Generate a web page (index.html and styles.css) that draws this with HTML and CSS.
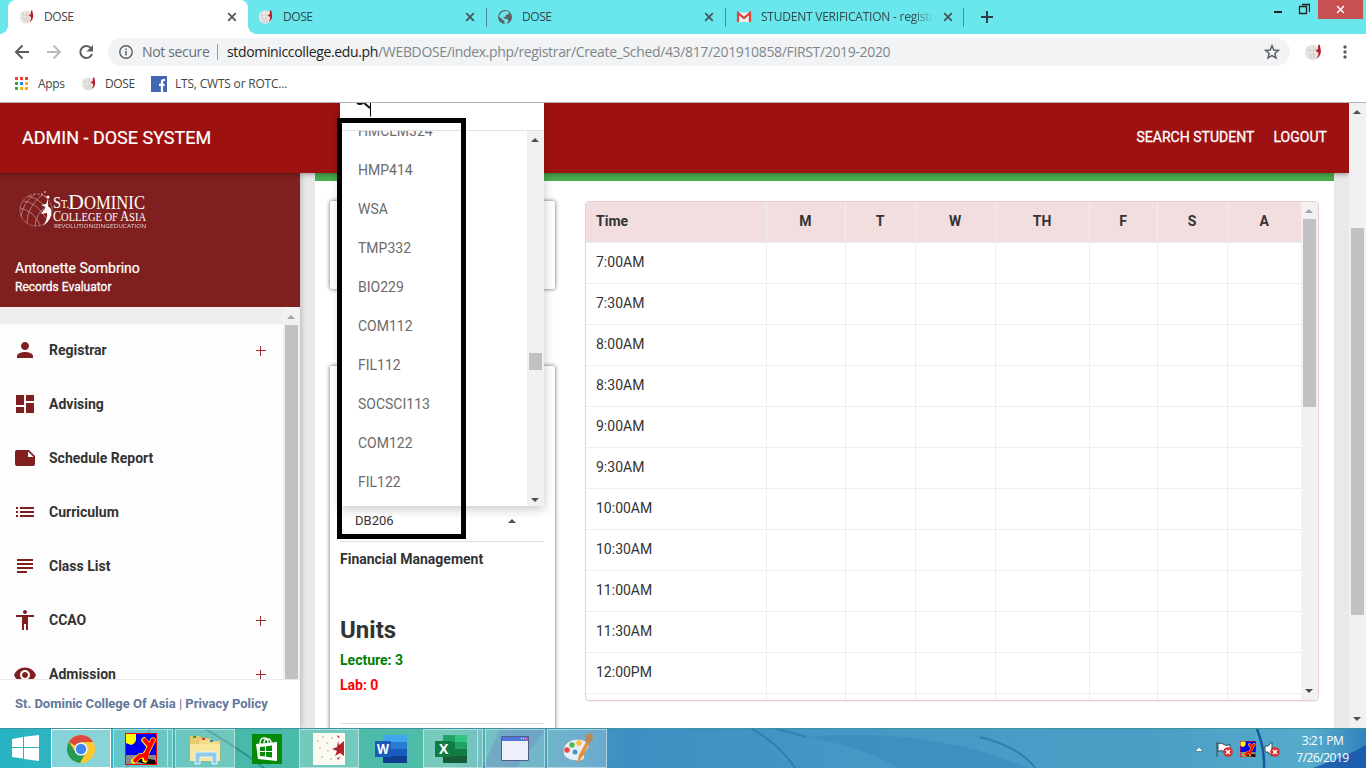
FILE: index.html
```html
<!DOCTYPE html>
<html lang="en">
<head>
<meta charset="utf-8">
<title>DOSE</title>
<link rel="stylesheet" href="styles.css">
</head>
<body>
<svg class="defs" aria-hidden="true">
  <defs>
    <symbol id="globe" viewBox="0 0 16 16"><circle cx="7.300" cy="8" r="6.600" fill="#ebe7e4"/><path d="M2 5.500q5 2 9-1M1.500 9q5 2.500 9-.5M4 3q0 6 3 11M8 2q-1 7 1 12M3 12q4 1 7-1" stroke="#cbc3be" stroke-width=".5" fill="none"/><path d="M12 1.500h1.300l.7 3.500q1.200 5-3.500 8.300 2.200-3 1.600-5.300l-2.600-1.500 2.200-1.200z" fill="#b5202c"/></symbol>
    <symbol id="man" viewBox="0 0 32 32"><path fill="#f00" d="M0 0h32v32H0z"/><path fill="#0000f8" d="M1 1h30v21H1z"/><path fill="#888" d="M1 22h30v9H1z"/><path d="M1 1h10v6q-1 4-5 5l-5-2z" fill="#ff0"/><path d="M9 27q6 4 22 4l-1-4-14-2z" fill="#000"/><path d="M19 7l5 6M28 7l-7 14q-2 2-6 2l-6 5M21 20l-1 7" stroke="#ff0" stroke-width="5.500" fill="none" stroke-linecap="round"/><path d="M19.500 7l5 6M28 7l-7 14q-2 2-6 2l-5 4.500M22 19l-1 7" stroke="#f00" stroke-width="4" fill="none" stroke-linecap="round"/></symbol>
    <symbol id="x" viewBox="0 0 10 10"><path d="M1.200 1.200l7.600 7.600M8.800 1.200l-7.600 7.600" stroke="currentColor" stroke-width="1.700"/></symbol>
    <symbol id="bad" viewBox="0 0 10 10"><circle cx="5" cy="5" r="4.800" fill="#d93030"/><path d="M3 3l4 4M7 3l-4 4" stroke="#fff" stroke-width="1.600"/></symbol>
  </defs>
</svg>

<header class="tabs">
  <div class="tab active"><svg class="fav"><use href="#globe"/></svg><span>DOSE</span><svg class="close"><use href="#x"/></svg></div>
  <div class="tab"><svg class="fav"><use href="#globe"/></svg><span>DOSE</span><svg class="close"><use href="#x"/></svg></div>
  <div class="tab sep"><svg class="fav" viewBox="0 0 16 16"><circle cx="8" cy="8" r="7" fill="#5b6164"/><path d="M6 2.500l4-.5 2.500 2-1.500 1.500-2 .2-.5 2-2.500.6 1.500 1.500h2l2 1.500-.5 1.500-2 2.500-1.500-.5v-2.500L5.500 10.500 2 7.500 3 5z" fill="#6ae7ec"/></svg><span>DOSE</span><svg class="close"><use href="#x"/></svg></div>
  <div class="tab sep"><svg class="fav" viewBox="0 0 16 16"><path fill="#eee" d="M2 3.500h12v9.500H2z"/><path d="M2 13V4l6 5 6-5v9" fill="none" stroke="#d84437" stroke-width="2.200"/></svg><span class="fade">STUDENT VERIFICATION - registrar</span><svg class="close"><use href="#x"/></svg></div>
  <div class="newtab sep"><svg width="12" height="12"><path d="M6 0v12M0 6h12" stroke="#333c40" stroke-width="2"/></svg></div>
  <div class="wins">
    <svg width="40" height="20"><path d="M4 12h8" stroke="#222" stroke-width="2"/><path d="M29.500 6.500h7v7h-7zM32 4.500h7.500V12" fill="none" stroke="#222" stroke-width="1.300"/></svg>
    <div class="winclose"><svg viewBox="0 0 10 10"><use href="#x"/></svg></div>
  </div>
</header>

<div class="toolbar">
  <svg width="110" height="36"><g fill="none" stroke="#5a5e62" stroke-width="2"><path d="M29 18H16M22.500 11.500L16 18l6.500 6.500"/><path d="M47 18h13M53.500 11.500L60 18l-6.500 6.500" stroke="#b9bbbd"/><path d="M91 14.200A6 6 0 1 0 92 20"/></g><path d="M93 11v6.500h-6.500z" fill="#5a5e62"/></svg>
  <div class="omni">
    <svg class="info" viewBox="0 0 14 14"><circle cx="7" cy="7" r="6.200" fill="none" stroke="#5a5e62" stroke-width="1.400"/><path d="M7 6v4.500M7 3.500v1.500" stroke="#5a5e62" stroke-width="1.500"/></svg>
    <span class="ns">Not secure</span><i></i><span class="url"><b>stdominiccollege.edu.ph</b>/WEBDOSE/index.php/registrar/Create_Sched/43/817/201910858/FIRST/2019-2020</span>
    <svg class="star" viewBox="0 0 16 16"><path d="M8 1.800l1.800 4.200 4.600.4-3.500 3 1.100 4.500L8 11.500l-4 2.400 1.100-4.500-3.500-3 4.600-.4z" fill="none" stroke="#5a5e62" stroke-width="1.500"/></svg>
  </div>
  <svg class="avatar"><use href="#globe"/></svg>
  <svg class="dots" width="4" height="14"><g fill="#5a5e62"><circle cx="2" cy="2" r="1.700"/><circle cx="2" cy="7" r="1.700"/><circle cx="2" cy="12" r="1.700"/></g></svg>
</div>

<nav class="marks">
  <svg class="apps" width="13" height="13"><path fill="#ea4335" d="M0 0h3v3H0zM5 0h3v3H5zM10 0h3v3h-3z"/><path fill="#34a853" d="M0 5h3v3H0zM0 10h3v3H0z"/><path fill="#2a84f5" d="M5 5h3v3H5z"/><path fill="#fbad05" d="M10 5h3v3h-3zM5 10h3v3H5zM10 10h3v3h-3z"/></svg><span class="m1">Apps</span>
  <svg class="fav"><use href="#globe"/></svg><span class="m2">DOSE</span>
  <svg width="16" height="16"><path fill="#4267b2" d="M0 0h16v16H0z"/><path d="M14 4h-1.500q-1.500 0-1.500 1.500V16M8 8.800h5.500" stroke="#fff" stroke-width="2.200" fill="none"/></svg><span class="m3">LTS, CWTS or ROTC...</span>
</nav>

<div class="page">
  <div class="app">
    <div class="topbar"><h1>ADMIN - DOSE SYSTEM</h1><a class="search">SEARCH STUDENT</a><a>LOGOUT</a></div>
    <div class="body">
      <aside class="side">
        <div class="user">
          <svg class="logo" width="130" height="42"><g fill="none" stroke="#c99a9a" stroke-width=".7"><circle cx="17" cy="20" r="16" stroke-dasharray="3 1"/><path d="M4 11q13 0 25 20M9 6q16 4 23 20M1 18q14 3 20 17M8 33Q8 17 23 5M2 27Q4 12 16 4M16 36q0-12 14-22"/></g><path d="M29 9l-2 5-5 1 5 2-5 7 6-1q1 6-4 13 10-7 8-17l-3-3z" fill="#fff"/><g fill="#fff"><circle cx="29" cy="7" r="1.500"/><circle cx="26" cy="2" r=".8"/><circle cx="23" cy="4" r=".7"/><circle cx="26" cy="6" r=".6"/>
          <g class="serif"><text x="34" y="18" font-size="16" textLength="8" lengthAdjust="spacingAndGlyphs">S</text><text x="42" y="18" font-size="12" textLength="8" lengthAdjust="spacingAndGlyphs">T.</text><text x="49" y="19" font-size="22">D</text><text x="65" y="19" font-size="18" textLength="61" lengthAdjust="spacingAndGlyphs">OMINIC</text><text x="34" y="31" font-size="15" textLength="93" lengthAdjust="spacingAndGlyphs">C<tspan font-size="13">OLLEGE OF</tspan> A<tspan font-size="13">SIA</tspan></text></g><text class="tagline" x="35" y="37.500" font-size="6" textLength="92" lengthAdjust="spacingAndGlyphs">REVOLUTIONIZINGEDUCATION</text></g></svg>
          <p class="name">Antonette Sombrino</p><p class="role">Records Evaluator</p>
        </div>
        <div class="menuwrap">
          <ul class="menu">
            <li><svg viewBox="0 0 24 24"><path d="M12 12c2.210 0 4-1.790 4-4s-1.790-4-4-4-4 1.790-4 4 1.790 4 4 4zm0 2c-2.670 0-8 1.340-8 4v2h16v-2c0-2.660-5.330-4-8-4z"/></svg>Registrar<em></em></li>
            <li><svg viewBox="0 0 24 24"><path d="M3 13h8V3H3v10zm0 8h8v-6H3v6zm10 0h8V11h-8v10zm0-18v6h8V3h-8z"/></svg>Advising</li>
            <li><svg viewBox="0 0 24 24"><path d="M22 10l-6-6H4c-1.100 0-2 .9-2 2v12.010c0 1.100.9 1.990 2 1.990l16-.01c1.100 0 2-.89 2-1.990v-8zm-7-4.500l5.500 5.500H15V5.500z"/></svg>Schedule Report</li>
            <li><svg viewBox="0 0 24 24"><path d="M3 13h2v-2H3v2zm0 4h2v-2H3v2zm0-8h2V7H3v2zm4 4h14v-2H7v2zm0 4h14v-2H7v2zM7 7v2h14V7H7z"/></svg>Curriculum</li>
            <li><svg viewBox="0 0 24 24"><path d="M14 17H4v2h10v-2zm6-8H4v2h16V9zM4 15h16v-2H4v2zM4 5v2h16V5H4z"/></svg>Class List</li>
            <li><svg viewBox="0 0 24 24"><path d="M12 2c1.100 0 2 .9 2 2s-.9 2-2 2-2-.9-2-2 .9-2 2-2zm9 7h-6v13h-2v-6h-2v6H9V9H3V7h18v2z"/></svg>CCAO<em></em></li>
            <li><svg viewBox="0 0 24 24"><path d="M12 4.500C7 4.500 2.730 7.610 1 12c1.730 4.390 6 7.500 11 7.500s9.270-3.110 11-7.500c-1.730-4.390-6-7.500-11-7.500zM12 17c-2.760 0-5-2.240-5-5s2.240-5 5-5 5 2.240 5 5-2.240 5-5 5zm0-8c-1.660 0-3 1.340-3 3s1.340 3 3 3 3-1.340 3-3-1.340-3-3-3z"/></svg>Admission<em></em></li>
          </ul>
          <div class="bar sidebar"><i class="up dim"></i><div class="thumb"></div></div>
        </div>
        <footer>St. Dominic College Of Asia <span>|</span> Privacy Policy</footer>
      </aside>
      <main>
        <div class="sheet">
          <div class="left">
            <section class="card first"></section>
            <section class="card second">
              <div class="select">DB206<i class="up"></i></div>
              <p class="subject">Financial Management</p>
              <h2>Units</h2>
              <p class="lec">Lecture: 3</p><p class="lab">Lab: 0</p><hr>
            </section>
          </div>
          <div class="sched">
            <table>
              <colgroup><col class="c0"><col class="c1"><col class="c2"><col class="c3"><col class="c4"><col class="c5"><col class="c6"><col class="c7"></colgroup>
              <tr><th>Time<th>M<th>T<th>W<th>TH<th>F<th>S<th>A
              <tr><td>7:00AM<td><td><td><td><td><td><td>
              <tr><td>7:30AM<td><td><td><td><td><td><td>
              <tr><td>8:00AM<td><td><td><td><td><td><td>
              <tr><td>8:30AM<td><td><td><td><td><td><td>
              <tr><td>9:00AM<td><td><td><td><td><td><td>
              <tr><td>9:30AM<td><td><td><td><td><td><td>
              <tr><td>10:00AM<td><td><td><td><td><td><td>
              <tr><td>10:30AM<td><td><td><td><td><td><td>
              <tr><td>11:00AM<td><td><td><td><td><td><td>
              <tr><td>11:30AM<td><td><td><td><td><td><td>
              <tr><td>12:00PM<td><td><td><td><td><td><td>
              <tr><td><td><td><td><td><td><td><td>
            </table>
            <div class="bar"><i class="up dim"></i><div class="thumb t2"></div><i class="down"></i></div>
          </div>
        </div>
      </main>
    </div>
    <div class="drop">
      <div class="find"><svg width="20" height="15"><path d="M2 0q3 2 6 0M9 0l6 5" fill="none" stroke="#111" stroke-width="2"/><path d="M15.500 0v13.500" stroke="#000" stroke-width="1"/></svg></div>
      <div class="opts">
        <ul><li>HMCLM324</li><li>HMP414</li><li>WSA</li><li>TMP332</li><li>BIO229</li><li>COM112</li><li>FIL112</li><li>SOCSCI113</li><li>COM122</li><li>FIL122</li></ul>
        <div class="bar"><i class="up"></i><div class="thumb t3"></div><i class="down"></i></div>
      </div>
    </div>
    <div class="marker"></div>
  </div>
  <div class="bar"><i class="up"></i><div class="thumb t4"></div><i class="down"></i></div>
</div>

<div class="taskbar">
  <svg class="wall" width="1366" height="40"><g fill="none" stroke="#1b6d88" stroke-width="2" opacity=".55"><path d="M205 0q35 20 60 40M150 0l-24 40"/></g><path d="M500 0h46l-30 40h-34z" fill="#4b62b4" opacity=".35"/><path d="M752 0q26 14 44 40M776 0q14 3 30 8" fill="none" stroke="#2a78a8" stroke-width="2" opacity=".7"/><path d="M806 8q130-10 224 32H900q-40-24-94-32z" fill="#3385bd" opacity=".45"/><path d="M980 8q40 10 56 32" fill="none" stroke="#2a6fa6" stroke-width="2" opacity=".7"/><path d="M1257 0q8 20 7 40" fill="none" stroke="#18579b" stroke-width="2.500"/><path d="M1310 40q40-14 56-24v24z" fill="#1552a8" opacity=".8"/></svg>
  <div class="start"><svg width="27" height="26"><path fill="#fff" d="M0 4l11-2v10H0zM12 1.800L27 0v12H12zM0 13h11v10.500L0 22zM12 13h15v13l-15-2z"/></svg></div>
  <div class="task on"><svg width="30" height="30" viewBox="0 0 32 32"><circle cx="16" cy="16" r="15" fill="#fbc934"/><path d="M16 16L3 8.500A15 15 0 0 1 29 8.500H16z" fill="#dd4b3e"/><path d="M3 8.500A15 15 0 0 0 15 31l6.500-12L10 19z" fill="#259b55"/><circle cx="16" cy="16" r="7" fill="#fff"/><circle cx="16" cy="16" r="5.600" fill="#4285f4"/></svg></div>
  <div class="task stack"><svg width="32" height="32"><use href="#man"/></svg></div>
  <div class="task"><svg width="34" height="32"><path d="M2 3h10l2 3h6v21H2z" fill="#eacb6d"/><path d="M11 5h10l2 3h9v20H8z" fill="#f4dc87" stroke="#cda850" stroke-width=".6"/><path d="M5 3h3v2H5z" fill="#26a744"/><path d="M14 5h3v2h-3z" fill="#d33"/><path d="M22 7h3v2h-3z" fill="#38b"/><path d="M2 11h30v17H2z" fill="#f8e69e"/><path d="M7 31V21q0-2 2-2h18q2 0 2 2v10h-5v-7H12v7z" fill="#8dcbea" stroke="#e6f8ff"/></svg></div>
  <div class="task plain"><svg width="30" height="30"><path fill="#078a07" d="M0 0h30v30H0z"/><path d="M4 10l21-2v19l-19-2z" fill="#fff"/><path d="M8 10q0-6 4-6t4 5M12 9q0-4 3.500-4T19 9" stroke="#fff" stroke-width="1.300" fill="none"/><path d="M8 13l5-.6v4.600H8zM14 12.300l6-.7V17h-6zM8 18h5v4.600L8 22zM14 18h6v5.400l-6-.7z" fill="#078a07"/></svg></div>
  <div class="task"><svg width="32" height="32"><path fill="#fbfaf3" d="M0 0h32v32H0z"/><g fill="#cdc7bd"><circle cx="5" cy="8" r="1"/><circle cx="10" cy="4" r="1"/><circle cx="14" cy="10" r="1"/><circle cx="7" cy="15" r="1"/><circle cx="15" cy="18" r="1"/><circle cx="9" cy="24" r="1"/><circle cx="18" cy="26" r="1"/><circle cx="19" cy="5" r="1"/></g><path d="M25 8l1 4 5-4v15l-4-3-5 3 2-5-5-2 5-2zM24 2l3 2-2 1zM24 25l3-1-2 3z" fill="#b4242c"/></svg></div>
  <div class="task plain"><svg width="32" height="28"><path fill="#41a5ee" d="M8 0h24v7H8z"/><path fill="#2b7cd3" d="M8 7h24v7H8z"/><path fill="#185abd" d="M8 14h24v7H8z"/><path fill="#103f91" d="M8 21h24v7H8z"/><path fill="#185abd" d="M0 6h16v16H0z"/><text class="ic" x="2" y="19" textLength="12" lengthAdjust="spacingAndGlyphs">W</text></svg></div>
  <div class="task stack"><svg width="32" height="28"><path fill="#21a366" d="M8 0h12v7H8z"/><path fill="#33c481" d="M20 0h12v7H20z"/><path fill="#107c41" d="M8 7h24v14H8z"/><path fill="#21a366" d="M20 7h12v7H20z"/><path fill="#185c37" d="M8 21h24v7H8z"/><path fill="#107c41" d="M0 6h17v16H0z"/><text class="ic" x="4" y="19">X</text></svg></div>
  <div class="task"><svg width="28" height="26"><path fill="#eef0fb" stroke="#525c87" d="M.5.5h27v24H.5z"/><path fill="#5277dc" d="M1 1h26v4H1z"/><path fill="#fff" d="M20 2h1v1h-1zM22 2h1v1h-1z"/><path fill="#f66" d="M24 2h2v2h-2z"/></svg></div>
  <div class="task"><svg width="32" height="32"><path d="M2 17Q4 7 16 6q11 0 12 8l-5 7q3 7-7 7Q1 27 2 17z" fill="#e5eff8" stroke="#83a3c3"/><circle cx="6" cy="17" r="2.700" fill="#e44"/><circle cx="11" cy="12" r="2.700" fill="#5b4"/><circle cx="18" cy="10" r="2.700" fill="#fb3"/><circle cx="14" cy="19" r="2.500" fill="#4b93bf"/><path d="M16 31l2-9 7-13 3 2-6 12z" fill="#e89037"/><path d="M25 9l-1-7 7-2 1 6-4 5z" fill="#b98958"/></svg></div>
  <div class="tray"><svg width="86" height="18"><path d="M0 10.500L4 6l4 4.500z" fill="#fff" stroke="#37728c" stroke-width=".7"/><path d="M22 1v15M23 2.500q4-1 6 1t6 0v7q-4 2-6 0t-6 0z" fill="#fff" stroke="#2b4c5c"/><use href="#bad" x="28" y="6" width="10" height="10"/><use href="#man" x="45" y="0" width="16" height="16"/><path d="M70 5h3l4-4v14l-4-4h-3z" fill="#fff" stroke="#2b4c5c"/><use href="#bad" x="75" y="6" width="10" height="10"/></svg></div>
  <div class="clock">3:21 PM<br>7/26/2019</div>
</div>
</body>
</html>
```
FILE: styles.css
```css
*{box-sizing:border-box}
body{margin:0;width:1366px;height:768px;overflow:hidden;display:flex;flex-direction:column;background:#fff;font-family:Roboto,sans-serif;font-size:14px;color:#333}
h1,h2,p,ul{margin:0;padding:0}
ul{list-style:none}
svg{display:block;flex:none}
.defs{display:none}
.tabs,.marks,.toolbar,.taskbar{font-family:"Open Sans",sans-serif}
.tabs{height:34px;flex:none;background:#6ae7ec;display:flex;padding-left:9px;font-size:12px;letter-spacing:-.45px;color:#33484c}
.tab{width:239px;height:34px;display:flex;align-items:center;padding:0 11px 0 11px;position:relative}
.tab span{flex:1;margin-left:9px;white-space:nowrap;overflow:hidden;line-height:20px}
.tab.active{background:#fff;border-radius:8px 8px 0 0;color:#444;margin-left:-1px;width:240px}
.tab.active:before,.tab.active:after{content:"";position:absolute;bottom:0;width:8px;height:8px}
.tab.active:before{left:-8px;background:radial-gradient(circle at 0 0,transparent 7.500px,#fff 8px)}
.tab.active:after{right:-8px;background:radial-gradient(circle at 100% 0,transparent 7.500px,#fff 8px)}
.sep{background:linear-gradient(#4d8d93,#4d8d93) 0 8px/1px 19px no-repeat}
.tab:nth-child(n+2){left:-1px}
.tab .fade{margin-right:9px;letter-spacing:-.23px;mask-image:linear-gradient(90deg,#000 88%,transparent)}
.fav{width:16px;height:16px}
.close{width:10px;height:10px;color:#42565a}
.active .close{color:#555}
.newtab{width:40px;padding:11px 0 0 18px}
.newtab.sep{margin-left:-2px}
.wins{margin-left:auto;display:flex;padding-right:3px}
.wins>svg{margin-right:8px}
.winclose{width:45px;height:19px;background:#c75050;color:#fff;padding:5px 18px}
.winclose svg{width:9px;height:9px}
.toolbar{height:36px;flex:none;display:flex;align-items:center}
.omni{margin-left:-2px;width:1182px;height:28px;border-radius:14px;background:#f1f3f4;display:flex;align-items:center;font-size:14px;color:#80868b;padding-left:11px}
.info{width:14px;height:14px}
.ns{margin-left:9px;width:68px;letter-spacing:-.35px;white-space:nowrap;color:#6b7074}
.ns,.url{margin-top:-2px}
.omni i{width:1px;height:16px;background:#999;margin:0 9px 0 7px}
.url{letter-spacing:-.345px;white-space:nowrap}
.url b{font-weight:400;color:#222}
.star{width:16px;height:16px;margin-left:auto;margin-right:10px}
.avatar{width:19px;height:19px;margin-left:14px}
.dots{margin-left:20px}
.marks{height:33px;flex:none;border-bottom:1px solid #b5b5b9;display:flex;align-items:center;padding:0 0 5px 15px;font-size:12px;letter-spacing:-.35px;color:#444}
.m1{margin:0 15px 0 10px;width:28px}
.m2{margin:0 16px 0 8px;width:30px}
.m3{margin-left:8px;letter-spacing:-.2px}
.page{height:625px;flex:none;display:flex}
.app{width:1349px;position:relative;display:flex;flex-direction:column;overflow:hidden}
.topbar{height:70px;flex:none;background:#9e1111;box-shadow:0 1px 5px rgba(0,0,0,.4);z-index:1;color:#fff;display:flex;align-items:center;padding:0 22px 3px}
h1{font-size:18px;font-weight:400;flex:1;padding-top:2px;-webkit-text-stroke:.2px}
.topbar a{font-size:14px;-webkit-text-stroke:.3px;letter-spacing:.03px}
.search{margin-right:19px}
.body{display:flex;flex:1;min-height:0}
.side{width:300px;display:flex;flex-direction:column;background:#fff;box-shadow:2px 0 5px rgba(0,0,0,.18);z-index:0;position:relative}
.user{height:134px;flex:none;background:#801f1f;color:#fff;padding:17px 15px 0 19px}
.serif{font-family:"Liberation Serif",serif}
.tagline{font-family:"Open Sans",sans-serif;opacity:.8}
.name{font-size:14px;line-height:18px;margin:27px 0 0 -4px;-webkit-text-stroke:.2px}
.role{font-size:12px;font-weight:400;-webkit-text-stroke:.3px;line-height:18px;margin-left:-4px;padding-top:1px}
.menuwrap{height:372px;flex:none;display:flex;overflow:hidden}
.menu{flex:1;border-top:17px solid #eee;background:#fdfdfd;color:#333}
.menu li{height:54px;display:flex;align-items:center;padding:0 17px 2px 13px;font-weight:700}
.menu svg{width:24px;height:24px;fill:#801f1f;margin-right:12px}
.menu li:last-child svg{margin-top:1px}
.menu em{margin-left:auto;width:10px;height:10px;margin-top:2px;background:linear-gradient(#9b2a2a,#9b2a2a) 0 4px/10px 1px no-repeat,linear-gradient(#9b2a2a,#9b2a2a) 4px 0/1px 10px no-repeat}
.menu em{outline:0;filter:drop-shadow(0 0 .3px #9b2a2a)}
footer{height:49px;border-top:1px solid #e9e9e9;padding:15px;font-size:13px;font-weight:700;line-height:18px;color:#607899;white-space:nowrap}
footer span{font-weight:400}
.bar{width:17px;flex:none;background:#f1f1f1;position:relative;display:flex;flex-direction:column;align-items:center}
.bar .up{margin:7px 1px 6px 0}
.bar .down{margin:auto 1px 6px 0}
.up,.down{border:4px solid transparent;border-top-width:0;border-bottom:4px solid #505050;width:8px;height:4px}
.down{border-bottom:0;border-top:4px solid #505050}
.up.dim{border-bottom-color:#a3a3a3}
.thumb{width:13px;height:354px;flex:none;background:#c1c1c1}
.sidebar .up{margin:8px 1px 6px 0}
.t2{height:188px}
.t3{height:17px;margin-top:205px}
.opts .down{margin-bottom:4px}
.sched .down,.page>.bar .down{margin-bottom:7px}
.t4{height:387px;margin-top:108px}
main{flex:1;background:#e9e9e9;padding:0 15px}
.sheet{height:100%;border-top:8px solid #4bac4f;background:#fff;display:flex;padding:20px 15px 0}
.left{width:225px;margin-right:30px}
.card{background:#fff;box-shadow:0 0 4px rgba(0,0,0,.6);border-radius:2px}
.first{height:88px;margin-bottom:77px}
.second{height:420px;padding:134px 11px 0 10px}
.select{height:42px;border-bottom:1px solid #ddd;font-size:13px;padding:0 28px 0 15px;display:flex;align-items:center;justify-content:space-between}
.subject{font-weight:700;line-height:20px;margin-top:7px}
h2{font-size:24px;line-height:30px;font-weight:700;margin-top:46px}
.lec,.lab{font-weight:700;line-height:25px;color:green}
.lec{margin-top:3px}
.lab{color:red}
hr{border:0;border-top:1px solid #ddd;margin:25px 0 0}
.sched{width:734px;height:500px;border:1px solid #ebccd1;border-radius:4px;display:flex;overflow:hidden;box-shadow:0 1px 1px rgba(0,0,0,.05)}
.sched table{width:715px;flex:none;border-collapse:collapse;table-layout:fixed;align-self:flex-start}
th,td{height:41px;padding:0 10px 2px;border-bottom:1px solid #eee;border-left:1px solid #eee;font-size:14px}
th{height:40px;background:#f2dede;font-weight:700;color:#333}
tr>:first-child{text-align:left;border-left:0}
.c0{width:180px}.c1{width:79px}.c2{width:70px}.c3{width:80px}.c4{width:94px}.c5{width:68px}.c6{width:70px}.c7{width:74px}
.drop{position:absolute;z-index:3;left:340px;top:0;width:204px;height:403px;background:#fff;box-shadow:0 3px 10px rgba(0,0,0,.22);display:flex;flex-direction:column}
.find{height:28px;flex:none;border-bottom:1px solid #e2e2e2;padding-left:15px}
.opts{height:375px;display:flex}
.opts ul{flex:1;overflow:hidden}
.opts li{height:39px;line-height:39px;padding-left:18px;color:#6b6b6b}
.opts li:first-child{margin-top:-19px}
.marker{position:absolute;z-index:4;left:337px;top:15px;width:129px;height:421px;border:5px solid #000}
.taskbar{height:40px;flex:none;position:relative;display:flex;background:linear-gradient(90deg,#27b3c4 0,#35b5bb 8%,#48b8a9 16%,#50bda9 32%,#479dbe 41%,#3f8ec3 46%,#4699c5 65%,#4b9fc5 85%,#56accb 96%,#3182bd 100%);border-top:1px solid #3b93a1;color:#fff}
.wall{position:absolute;left:0;top:0}
.start{width:51px;padding:6px 0 0 12px;position:relative}
.task{width:60px;height:39px;margin-right:2px;border:1px solid rgba(255,255,255,.45);background:rgba(255,255,255,.22);display:flex;align-items:center;justify-content:center;position:relative}
.task.on{border-color:#fff;background:rgba(255,255,255,.42)}
.task.stack{padding-right:5px}
.task.stack:after{content:"";position:absolute;right:4px;top:0;bottom:0;width:1px;background:rgba(255,255,255,.5)}
.task.plain{border-color:transparent;background:none}
.ic{font:700 14px "Open Sans",sans-serif;fill:#fff}
.tray{margin-left:auto;padding:12px 0 0;position:relative}
.clock{width:85px;padding:3px 2px 0 0;text-align:center;font-size:12px;line-height:17px;letter-spacing:-.5px;position:relative}
```
